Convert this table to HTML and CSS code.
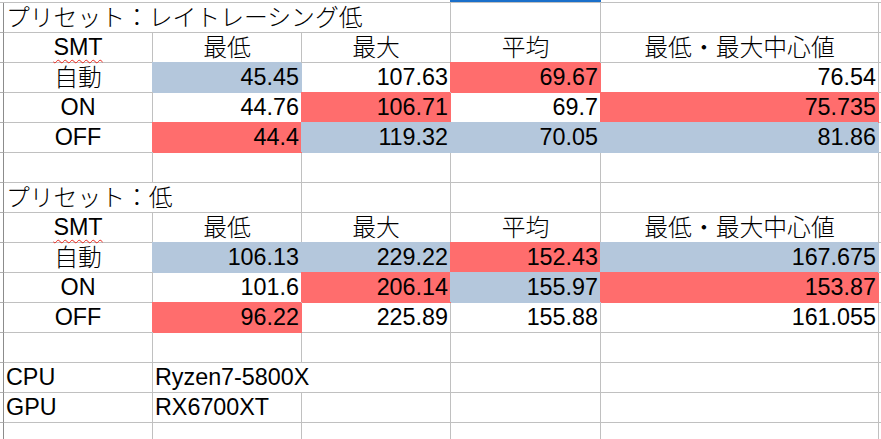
FILE: index.html
```html
<!DOCTYPE html>
<html lang="ja">
<head>
<meta charset="utf-8">
<title>SMT</title>
<link rel="stylesheet" href="styles.css">
</head>
<body>
<div class="sheet">
  <div class="cursor"></div>
  <div class="grid">
    <!-- row 1 -->
    <div class="stub"></div><div class="c span3 left ja">プリセット：レイトレーシング低</div><div class="c"></div><div class="c"></div><div class="c x"></div>
    <!-- row 2 -->
    <div class="stub"></div><div class="c mid"><span class="spell">SMT</span></div><div class="c mid ja">最低</div><div class="c mid ja">最大</div><div class="c mid ja">平均</div><div class="c mid ja">最低・最大中心値</div><div class="c x"></div>
    <!-- row 3 -->
    <div class="stub"></div><div class="c mid ja">自動</div><div class="c num blue">45.45</div><div class="c num">107.63</div><div class="c num red">69.67</div><div class="c num">76.54</div><div class="c x"></div>
    <!-- row 4 -->
    <div class="stub"></div><div class="c mid">ON</div><div class="c num">44.76</div><div class="c num red">106.71</div><div class="c num">69.7</div><div class="c num red">75.735</div><div class="c x"></div>
    <!-- row 5 -->
    <div class="stub"></div><div class="c mid">OFF</div><div class="c num red">44.4</div><div class="c num blue">119.32</div><div class="c num blue">70.05</div><div class="c num blue">81.86</div><div class="c x"></div>
    <!-- row 6 -->
    <div class="stub"></div><div class="c"></div><div class="c"></div><div class="c"></div><div class="c"></div><div class="c"></div><div class="c x"></div>
    <!-- row 7 -->
    <div class="stub"></div><div class="c span2 left ja">プリセット：低</div><div class="c"></div><div class="c"></div><div class="c"></div><div class="c x"></div>
    <!-- row 8 -->
    <div class="stub"></div><div class="c mid"><span class="spell">SMT</span></div><div class="c mid ja">最低</div><div class="c mid ja">最大</div><div class="c mid ja">平均</div><div class="c mid ja">最低・最大中心値</div><div class="c x"></div>
    <!-- row 9 -->
    <div class="stub"></div><div class="c mid ja">自動</div><div class="c num blue">106.13</div><div class="c num blue">229.22</div><div class="c num red">152.43</div><div class="c num blue">167.675</div><div class="c x"></div>
    <!-- row 10 -->
    <div class="stub"></div><div class="c mid">ON</div><div class="c num">101.6</div><div class="c num red">206.14</div><div class="c num blue">155.97</div><div class="c num red">153.87</div><div class="c x"></div>
    <!-- row 11 -->
    <div class="stub"></div><div class="c mid">OFF</div><div class="c num red">96.22</div><div class="c num">225.89</div><div class="c num">155.88</div><div class="c num">161.055</div><div class="c x"></div>
    <!-- row 12 -->
    <div class="stub"></div><div class="c"></div><div class="c"></div><div class="c"></div><div class="c"></div><div class="c"></div><div class="c x"></div>
    <!-- row 13 -->
    <div class="stub"></div><div class="c left">CPU</div><div class="c span2 left">Ryzen7-5800X</div><div class="c"></div><div class="c"></div><div class="c x"></div>
    <!-- row 14 -->
    <div class="stub"></div><div class="c left">GPU</div><div class="c left">RX6700XT</div><div class="c"></div><div class="c"></div><div class="c"></div><div class="c x"></div>
    <!-- row 15 -->
    <div class="stub"></div><div class="c"></div><div class="c"></div><div class="c"></div><div class="c"></div><div class="c"></div><div class="c x"></div>
  </div>
</div>
</body>
</html>
```
FILE: styles.css
```css
html, body {
  margin: 0;
  padding: 0;
  background: #ffffff;
  overflow: hidden;
}

.sheet {
  position: relative;
  width: 881px;
  height: 439px;
  overflow: hidden;
  padding-top: 2px;
  box-sizing: border-box;
  font-family: "Liberation Sans", "Noto Sans CJK JP", sans-serif;
  font-size: 23.33px;
  color: #000000;
}

.cursor {
  position: absolute;
  top: 0;
  left: 450px;
  width: 151px;
  height: 2px;
  background: #1a6fca;
  z-index: 2;
}

.grid {
  display: grid;
  grid-template-columns: 4px 149px 149px 149px 150px 278px 10px;
  grid-auto-rows: 30px;
  border-top: 1px solid #c0c0c0;
}

.stub {
  box-sizing: border-box;
  border-right: 1px solid #8c8c8c;
  border-bottom: 1px solid #b0b0b0;
}

.c {
  box-sizing: border-box;
  border-right: 1px solid #c0c0c0;
  border-bottom: 1px solid #c0c0c0;
  line-height: 29px;
  white-space: nowrap;
  overflow: visible;
}

.c.x {
  border-right: none;
}

.span2 { grid-column: span 2; }
.span3 { grid-column: span 3; }

.left {
  padding-left: 2px;
  text-align: left;
}

.mid {
  text-align: center;
}

.num {
  text-align: right;
  padding-right: 2px;
}

.ja {
  font-size: 23.8px;
  font-weight: 300;
}

.blue {
  background: #b4c7dc;
  border-color: #b4c7dc;
  box-shadow: -1px -1px 0 0 #b4c7dc;
}

.red {
  background: #ff6d6d;
  border-color: #ff6d6d;
  box-shadow: -1px -1px 0 0 #ff6d6d;
}

.spell {
  text-decoration: underline wavy #e8261c;
  text-decoration-thickness: 1px;
  text-underline-offset: 4px;
}
```
